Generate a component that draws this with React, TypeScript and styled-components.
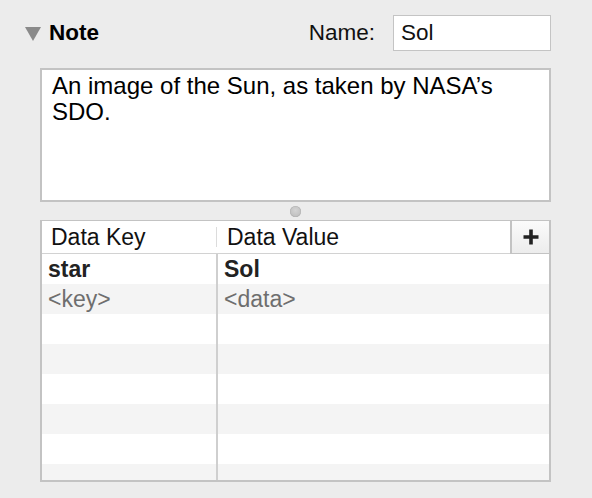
import React from "react";
import styled, { createGlobalStyle } from "styled-components";

const Global = createGlobalStyle`
  html, body { margin: 0; padding: 0; background: #ececec; }
  body { font-family: "Liberation Sans", Arial, sans-serif; color: #111; }
`;

const Page = styled.div`
  width: 592px;
  height: 498px;
  box-sizing: border-box;
  padding: 15px 41px 0 40px;
  display: flex;
  flex-direction: column;
`;

const HeaderRow = styled.div`
  display: flex;
  align-items: center;
  height: 36px;
`;

const Disclosure = styled.div`
  display: flex;
  align-items: center;
  gap: 8px;
  margin-left: -15px;
  flex: 1;
`;

const Triangle = styled.div`
  width: 0;
  height: 0;
  border-left: 8px solid transparent;
  border-right: 8px solid transparent;
  border-top: 14px solid #8a8a8a;
  margin-top: 1px;
`;

const Title = styled.span`
  font-weight: bold;
  font-size: 22.5px;
  color: #000;
`;

const NameLabel = styled.label`
  font-size: 22.5px;
  color: #111;
  margin-right: 18px;
`;

const NameInput = styled.div`
  box-sizing: border-box;
  width: 158px;
  height: 36px;
  border: 1px solid #c4c4c4;
  background: #fff;
  font-size: 22.5px;
  padding: 0 0 0 7px;
  display: flex;
  align-items: center;
`;

const NoteBox = styled.div`
  box-sizing: border-box;
  margin-top: 17px;
  height: 134px;
  border: 2px solid #c3c3c3;
  background: #fff;
  padding: 3px 10px 0 10px;
  font-size: 24px;
  line-height: 26px;
  color: #000;
`;

const SplitterRow = styled.div`
  height: 18px;
  display: flex;
  align-items: center;
  justify-content: center;
`;

const Dot = styled.div`
  width: 11px;
  height: 11px;
  border-radius: 50%;
  background: radial-gradient(circle at 50% 40%, #d4d4d4, #b8b8b8);
  box-shadow: inset 0 0 0 0.5px #b0b0b0;
`;

const Table = styled.div`
  box-sizing: border-box;
  height: 262px;
  border: 2px solid #c3c3c3;
  border-top-width: 1px;
  background: #fff;
  display: flex;
  flex-direction: column;
  overflow: hidden;
`;

const HeadRow = styled.div`
  display: flex;
  height: 33px;
  border-bottom: 1px solid #d2d2d2;
  flex-shrink: 0;
  box-sizing: border-box;
`;

const HeadCell = styled.div<{ $w?: number; $divider?: boolean }>`
  ${(p) => (p.$w ? `width: ${p.$w}px;` : "flex: 1;")}
  box-sizing: border-box;
  display: flex;
  align-items: center;
  padding-left: 9px;
  font-size: 23px;
  color: #111;
  position: relative;
  ${(p) =>
    p.$divider
      ? `&::after { content: ""; position: absolute; right: 1px; top: 6px; bottom: 6px; width: 1px; background: #dcdcdc; }`
      : ""}
`;

const AddButton = styled.div`
  width: 39px;
  box-sizing: border-box;
  border-left: 2px solid #c3c3c3;
  border-top: 1px solid #c3c3c3;
  border-bottom: 1px solid #c3c3c3;
  background: linear-gradient(#fbfbfb, #ececec);
  display: flex;
  align-items: center;
  justify-content: center;
  margin-top: -1px;
  margin-bottom: -1px;
`;

const Body = styled.div`
  flex: 1;
  position: relative;
  overflow: hidden;
`;

const Row = styled.div<{ $alt: boolean }>`
  display: flex;
  height: 30px;
  background: ${(p) => (p.$alt ? "#f4f4f4" : "#fff")};
`;

const Cell = styled.div<{ $w?: number; $kind: "bold" | "placeholder" | "empty" }>`
  ${(p) => (p.$w ? `width: ${p.$w}px;` : "flex: 1;")}
  box-sizing: border-box;
  display: flex;
  align-items: center;
  padding-left: 6px;
  padding-top: 1px;
  font-size: 23px;
  font-weight: ${(p) => (p.$kind === "bold" ? "bold" : "normal")};
  color: ${(p) => (p.$kind === "bold" ? "#222" : "#6e6e6e")};
  ${(p) => (p.$w ? "border-right: 2px solid #cfcfcf;" : "")}
`;

const rows: [string, string, "bold" | "placeholder" | "empty"][] = [
  ["star", "Sol", "bold"],
  ["<key>", "<data>", "placeholder"],
  ["", "", "empty"],
  ["", "", "empty"],
  ["", "", "empty"],
  ["", "", "empty"],
  ["", "", "empty"],
  ["", "", "empty"],
];

export default function App() {
  return (
    <>
      <Global />
      <Page>
        <HeaderRow>
          <Disclosure>
            <Triangle />
            <Title>Note</Title>
          </Disclosure>
          <NameLabel>Name:</NameLabel>
          <NameInput>Sol</NameInput>
        </HeaderRow>
        <NoteBox>An image of the Sun, as taken by NASA’s SDO.</NoteBox>
        <SplitterRow>
          <Dot />
        </SplitterRow>
        <Table>
          <HeadRow>
            <HeadCell $w={176} $divider>Data Key</HeadCell>
            <HeadCell>Data Value</HeadCell>
            <AddButton>
              <svg width="18" height="18" viewBox="0 0 18 18">
                <path d="M9 1.5v15M1.5 9h15" stroke="#222" strokeWidth="3.6" />
              </svg>
            </AddButton>
          </HeadRow>
          <Body>
            {rows.map((r, i) => (
              <Row key={i} $alt={i % 2 === 1}>
                <Cell $w={176} $kind={r[2]}>{r[0]}</Cell>
                <Cell $kind={r[2]}>{r[1]}</Cell>
              </Row>
            ))}
          </Body>
        </Table>
      </Page>
    </>
  );
}
